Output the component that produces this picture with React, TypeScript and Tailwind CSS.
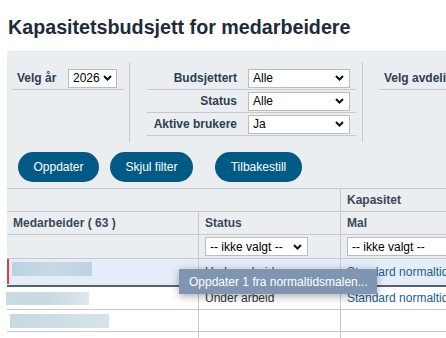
import type { ReactNode } from "react";

function Chevron() {
  return (
    <svg width="9" height="6" viewBox="0 0 9 6" className="shrink-0">
      <path d="M1 1l3.5 3.5L8 1" fill="none" stroke="#111" strokeWidth="2" />
    </svg>
  );
}

function Select({ value, className = "" }: { value: string; className?: string }) {
  return (
    <div
      className={`flex h-[19px] shrink-0 items-center justify-between border border-[#b8bdc1] bg-white pl-[4px] text-[12px] text-black ${className}`}
    >
      <span className="whitespace-nowrap">{value}</span>
      <Chevron />
    </div>
  );
}

function FilterRow({ label, value }: { label: string; value: string }) {
  return (
    <div className="flex h-[23px] items-center border-b border-[#c6cacd] pr-[6px]">
      <span className="w-[90px] shrink-0 text-right text-[12px] font-bold text-[#2d3e50]">{label}</span>
      <Select value={value} className="ml-[11px] w-[102px] pr-[5px]" />
    </div>
  );
}

function Button({ children, className = "" }: { children: ReactNode; className?: string }) {
  return (
    <button
      type="button"
      className={`flex h-[30px] shrink-0 items-center justify-center rounded-full bg-[#015a86] text-[12px] text-white ${className}`}
    >
      {children}
    </button>
  );
}

const mal = "Standard normaltidsmal";

export default function App() {
  return (
    <div className="h-screen overflow-hidden bg-white font-['Liberation_Sans',Arial,sans-serif]">
      <h1 className="pl-[8px] pt-[16px] text-[19.7px] font-bold leading-[23px] text-[#1d2b3a]">
        Kapasitetsbudsjett for medarbeidere
      </h1>

      <div className="ml-[7px] mt-[12px] bg-[#ebeef0] pt-[11px]">
        {/* filters */}
        <div className="flex h-[80px]">
          <div className="ml-[5px] mr-[5px] w-[112px] shrink-0 pt-[5px]">
            <div className="flex h-[23px] items-center border-b border-[#c6cacd] pl-[5px]">
              <span className="w-[51px] shrink-0 text-[12px] font-bold text-[#2d3e50]">Velg år</span>
              <Select value="2026" className="w-[49px] pr-[4px]" />
            </div>
          </div>
          <div className="w-px shrink-0 bg-[#c6cacd]" />
          <div className="ml-[17px] mr-[6px] w-[209px] shrink-0 pt-[5px]">
            <FilterRow label="Budsjettert" value="Alle" />
            <FilterRow label="Status" value="Alle" />
            <FilterRow label="Aktive brukere" value="Ja" />
          </div>
          <div className="w-px shrink-0 bg-[#c6cacd]" />
          <div className="ml-[16px] min-w-0 flex-1 overflow-hidden pt-[5px]">
            <div className="flex h-[23px] items-center border-b border-[#c6cacd] pl-[5px]">
              <span className="whitespace-nowrap text-[12px] font-bold text-[#2d3e50]">
                Velg avdeling
              </span>
            </div>
          </div>
        </div>

        {/* buttons */}
        <div className="flex pl-[11px] pt-[10px]">
          <Button className="w-[81px]">Oppdater</Button>
          <Button className="ml-[11px] w-[83px]">Skjul filter</Button>
          <Button className="ml-[22px] w-[87px]">Tilbakestill</Button>
        </div>

        {/* table */}
        <div className="relative mt-[6px] w-[700px] border-t border-[#c6cacd] text-[12px]">
          <div className="grid h-[23px] grid-cols-[334px_1fr] border-b border-[#c6cacd]">
            <div className="border-r border-[#c6cacd]" />
            <div className="flex items-center pl-[6px] font-bold text-[#38495a]">Kapasitet</div>
          </div>
          <div className="grid h-[23px] grid-cols-[192px_142px_1fr] border-b border-[#c6cacd] font-bold text-[#38495a]">
            <div className="flex items-center border-r border-[#c6cacd] pl-[6px]">Medarbeider ( 63 )</div>
            <div className="flex items-center border-r border-[#c6cacd] pl-[6px]">Status</div>
            <div className="flex items-center pl-[6px]">Mal</div>
          </div>
          <div className="grid h-[24px] grid-cols-[192px_142px_1fr] border-b border-[#c6cacd]">
            <div className="border-r border-[#c6cacd]" />
            <div className="flex items-center border-r border-[#c6cacd] pl-[6px]">
              <Select value="-- ikke valgt --" className="w-[103px] pr-[5px]" />
            </div>
            <div className="flex items-center pl-[6px]">
              <Select value="-- ikke valgt --" className="w-[180px] pr-[8px]" />
            </div>
          </div>

          {/* data rows */}
          <div className="grid h-[28px] grid-cols-[192px_142px_1fr] border-b-2 border-[#56646f] bg-[#e5eef8]">
            <div className="flex border-r border-[#c6cacd] pb-[1px]">
              <div className="w-[2px] bg-[#e0403a]" />
              <div className="ml-[3px] mt-[3px] h-[14px] w-[80px] bg-gradient-to-r from-[#bcd2e0] via-[#c6d9e5] to-[#bdd3e1]" />
            </div>
            <div className="flex items-center border-r border-[#c6cacd] pl-[6px] text-[#333]">Under arbeid</div>
            <div className="flex items-center whitespace-nowrap pl-[6px] text-[#1a5f8f]">{mal}</div>
          </div>
          <div className="grid h-[23px] grid-cols-[192px_142px_1fr] border-b border-[#c6cacd] bg-white">
            <div className="flex items-center border-r border-[#c6cacd]">
              <div className="-ml-[1px] h-[13px] w-[83px] bg-gradient-to-r from-[#c9dbe3] via-[#c7d9e1] to-[#dde8ed]" />
            </div>
            <div className="flex items-center border-r border-[#c6cacd] pl-[6px] text-[#333]">Under arbeid</div>
            <div className="flex items-center whitespace-nowrap pl-[6px] text-[#1a5f8f]">{mal}</div>
          </div>
          <div className="grid h-[22px] grid-cols-[192px_142px_1fr] border-b border-[#c6cacd] bg-white">
            <div className="flex items-center border-r border-[#c6cacd]">
              <div className="ml-[3px] h-[14px] w-[99px] bg-gradient-to-r from-[#c8d9e1] to-[#d6e3ea]" />
            </div>
            <div className="border-r border-[#c6cacd]" />
            <div />
          </div>
          <div className="grid h-[23px] grid-cols-[192px_142px_1fr] bg-white">
            <div className="border-r border-[#c6cacd]" />
            <div className="border-r border-[#c6cacd]" />
            <div />
          </div>

          {/* tooltip */}
          <div className="absolute left-[172px] top-[80px] flex h-[25px] w-[198px] items-center whitespace-nowrap bg-[#7f95b1] pl-[10px] text-[12px] text-white shadow-[0_2px_8px_rgba(0,0,0,0.35)]">
            Oppdater 1 fra normaltidsmalen...
          </div>
        </div>
      </div>
    </div>
  );
}
